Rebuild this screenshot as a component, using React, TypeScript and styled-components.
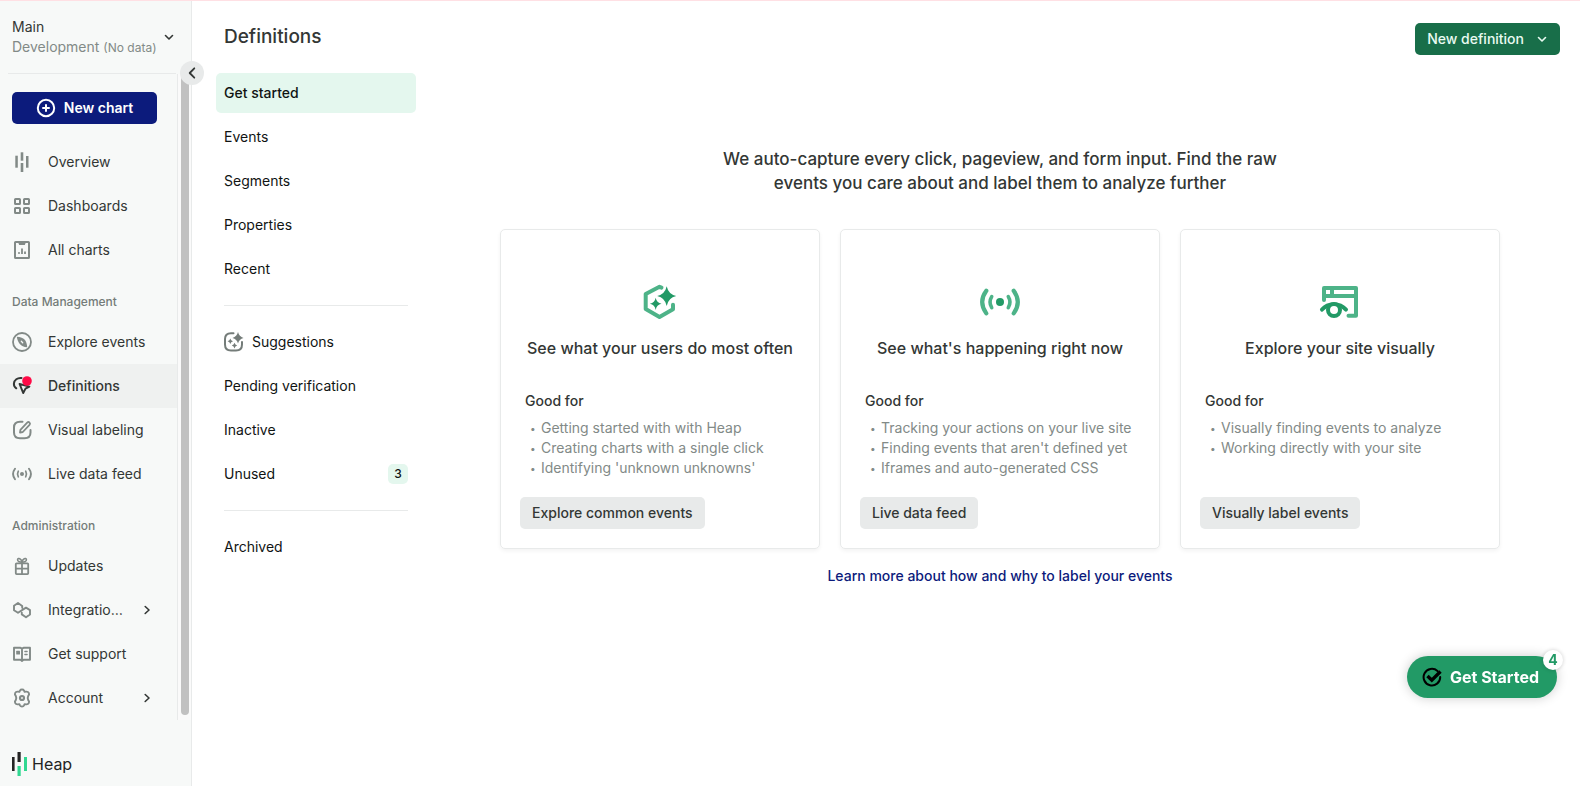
import React from "react";
import styled, { createGlobalStyle, css } from "styled-components";

const GlobalStyle = createGlobalStyle`
  *, *::before, *::after { box-sizing: border-box; }
  body {
    margin: 0;
    background: #fff;
    color: #333735;
    font-family: Inter, "Liberation Sans", sans-serif;
    font-size: 14px;
    line-height: 20px;
  }
  button { font: inherit; color: inherit; border: 0; padding: 0; background: none; cursor: pointer; }
  a { color: inherit; text-decoration: none; }
  h1, h2, h3, p, ul { margin: 0; padding: 0; font-weight: 400; }
  ul { list-style: none; }
  svg { display: block; flex: none; }
`;

/* ---------- Icons ---------- */

const Icon = ({ size = 20, children }: { size?: number; children: React.ReactNode }) => (
  <svg
    width={size}
    height={size}
    viewBox={`0 0 ${size} ${size}`}
    fill="none"
    stroke="currentColor"
    strokeWidth="2"
    strokeLinecap="round"
    strokeLinejoin="round"
    aria-hidden="true"
  >
    {children}
  </svg>
);

const OverviewIcon = () => (
  <Icon>
    <g fill="currentColor" stroke="none">
      <rect x="3.300" y="3.700" width="2.500" height="12" />
      <rect x="8.700" y="0.300" width="2.600" height="8.400" />
      <rect x="8.700" y="11" width="2.600" height="9" />
      <rect x="14" y="4" width="2.500" height="11.700" />
    </g>
  </Icon>
);

const DashboardsIcon = () => (
  <Icon>
    <rect x="3" y="3" width="5" height="5" rx="0.600" />
    <rect x="12" y="3" width="5" height="5" rx="0.600" />
    <rect x="3" y="12" width="5" height="5" rx="0.600" />
    <rect x="12" y="12" width="5" height="5" rx="0.600" />
  </Icon>
);

const ChartsIcon = () => (
  <Icon>
    <rect x="3" y="2" width="14" height="16" rx="0.600" />
    <path d="M6 2h8l-1.200 3H7.200z" fill="currentColor" stroke="none" />
    <path d="M10 8.500v5.500M13 11.500V14" strokeWidth="1.800" strokeLinecap="butt" />
    <circle cx="7" cy="13" r="1" fill="currentColor" stroke="none" />
  </Icon>
);

const CompassIcon = () => (
  <Icon>
    <circle cx="10" cy="10" r="9" strokeWidth="1.800" />
    <path
      d="M4.800 4.800c3.500.2 6.800 1.300 8.200 3.200 1.300 2 2 4.200 2.200 7.200-3.500-.2-5.800-1.200-7.400-3.200C6.300 10 5.200 8 4.800 4.800z"
      fill="currentColor"
      stroke="none"
    />
    <path d="M9.300 9.300l1.400 1.400" stroke="#f7f9f8" strokeWidth="1.300" />
  </Icon>
);

const DefinitionsIcon = () => (
  <Icon>
    <path d="M4.300 12.300C2.600 11.200 1.800 9.500 1.900 7.600 2.200 4 5.500 1.500 9.500 2" />
    <path d="M7.600 8l9.800 2.600-3.900 2-2.300 4.400z" />
    <circle cx="15" cy="5" r="4.800" fill="#ff0a46" stroke="none" />
  </Icon>
);

const LabelingIcon = () => (
  <Icon>
    <path d="M10.500 1.800H8C4 1.800 2 3.800 2 7.500v5C2 16.200 4 18.200 8 18.200h4.500c4 0 6-2 6-5.700V10" />
    <path
      d="M8 12.600l.4-2.800 6.800-7.100c.8-.8 1.600-.8 2.300-.1.700.7.700 1.500 0 2.300l-6.700 7.100z"
      strokeWidth="1.800"
    />
  </Icon>
);

const LiveIcon = () => (
  <Icon>
    <path d="M3 4.800C.6 8 .6 12 3 15.200M17 4.800c2.400 3.200 2.400 7.200 0 10.400" strokeWidth="1.900" />
    <path d="M6.300 7.200c-1 1.900-1 3.700 0 5.600M13.700 7.200c1 1.900 1 3.700 0 5.600" strokeWidth="1.700" />
    <circle cx="10" cy="10" r="2" fill="currentColor" stroke="none" />
  </Icon>
);

const GiftIcon = () => (
  <Icon>
    <rect x="3.800" y="7.300" width="12.400" height="10.800" rx="0.800" strokeWidth="1.800" />
    <path d="M10 6.500v11.300M4 12.600h12" strokeWidth="1.800" />
    <path
      d="M10 6.200C7.300 6.200 5.300 5.200 5.600 3.500 6.200 1.600 9.300 2.500 10 6.200zM10 6.200c2.700 0 4.700-1 4.400-2.700C13.800 1.600 10.700 2.500 10 6.200z"
      strokeWidth="1.600"
    />
  </Icon>
);

const IntegrationsIcon = () => (
  <Icon>
    <path
      d="M10.200 7.800V6L6 3 2 5.800v4.400L6 12.800l8-5.200 4 2.500v4.400L14 17.200l-4.200-2.800v-1.700"
      strokeWidth="1.900"
    />
  </Icon>
);

const SupportIcon = () => (
  <Icon>
    <path d="M2 3.800h6.500L10 4.600l1.500-.8H18v12h-6.500L10 17l-1.500-1.200H2zM10 4.600V17" strokeWidth="1.900" />
    <rect x="4.200" y="6.800" width="3.800" height="3.800" rx="0.500" fill="currentColor" stroke="none" />
    <path d="M13 7.500h2M13 10.500h2" strokeWidth="1.600" />
  </Icon>
);

const GearIcon = () => (
  <Icon>
    <path
      d="M8.100 2.300C8.500 1.500 9.200 1.500 10 1.500s1.500 0 1.900.8l.7 1.500 1.700-.2c1.600-.1 2.100.5 2.600 1.500.6 1.200.3 1.800-.7 2.900L15.700 10l.5 2c1 1.100 1.300 1.700.7 2.900-.5 1-1 1.600-2.600 1.500l-1.700-.2-.7 1.500c-.4.800-1.100.8-1.900.8s-1.500 0-1.900-.8l-.7-1.500-1.700.2c-1.600.1-2.100-.5-2.600-1.500-.6-1.200-.3-1.800.7-2.900L4.300 10l-.5-2c-1-1.100-1.300-1.700-.7-2.900.5-1 1-1.600 2.600-1.500l1.700.2z"
      strokeWidth="1.900"
    />
    <circle cx="10" cy="10" r="2" strokeWidth="2.200" />
  </Icon>
);

const SuggestionsIcon = () => (
  <Icon>
    <path d="M9.500 1.200H7C3 1.200 1 3.200 1 7v5.500C1 16.500 3 18.500 7 18.500h5c4 0 6-2 6-6V10" />
    <g fill="currentColor" stroke="none">
      <path d="M14 0q1.100 4.700 5.500 5.900-4.400 1.100-5.500 5.600-1.100-4.500-5.500-5.600 4.400-1.200 5.500-5.900z" />
      <path d="M6.300 6.500q.5 2.300 2.700 2.800-2.200.5-2.700 2.800-.5-2.300-2.700-2.800 2.200-.5 2.700-2.800z" />
      <path d="M10.500 10.800q.5 2.300 2.700 2.800-2.200.5-2.700 2.800-.5-2.300-2.700-2.800 2.200-.5 2.700-2.800z" />
    </g>
  </Icon>
);

const PlusCircleIcon = () => (
  <Icon>
    <circle cx="10" cy="10" r="8.200" />
    <path d="M10 7v6M7 10h6" />
  </Icon>
);

const CheckIcon = () => (
  <Icon>
    <path d="M15.500 4A8.300 8.300 0 1 0 18.200 10" strokeWidth="2" />
    <path d="M5.500 9l4.300 4.200 8.700-8.700" strokeWidth="3.400" strokeLinecap="butt" strokeLinejoin="miter" />
  </Icon>
);

const ChevronDown = () => (
  <Icon size={12}>
    <path d="M2.500 4.500 6 8l3.500-3.500" strokeWidth="1.600" />
  </Icon>
);
const ChevronRight = () => (
  <Icon size={12}>
    <path d="M4.200 2.500 8 6l-3.800 3.500" strokeWidth="1.600" />
  </Icon>
);
const ChevronLeft = () => (
  <Icon size={12}>
    <path d="M8.300 1.300 3.700 6l4.600 4.700" strokeWidth="1.800" />
  </Icon>
);

const OftenIcon = () => (
  <Icon size={48}>
    <path d="M25.500 9.600 23.500 8.800 9.700 16v15l13.800 8L37 31.300v-4.600" stroke="#4db388" strokeWidth="4" />
    <path
      d="M30.700 8.300q1.700 8 9.500 9.700-7.800 1.700-9.500 9.900-1.700-8.200-9.500-9.900 7.800-1.700 9.500-9.700zM19.700 19.800q.9 5 5.800 5.900-4.900.9-5.800 6.200-.9-5.300-5.800-6.200 4.900-.9 5.800-5.900z"
      fill="#229a66"
      stroke="none"
    />
  </Icon>
);

const LiveNowIcon = () => (
  <Icon size={48}>
    <g stroke="#4db388">
      <path d="M10.300 12.800C5 20 5 28 10.300 35.400M37.700 12.800C43 20 43 28 37.700 35.400" strokeWidth="4.200" />
      <path d="M15.700 18.600c-2.300 3.800-2.300 7.200 0 11M32.300 18.600c2.300 3.800 2.300 7.200 0 11" strokeWidth="3.600" />
    </g>
    <circle cx="24" cy="24" r="4" fill="#229a66" stroke="none" />
  </Icon>
);

const VisualIcon = () => (
  <Icon size={48}>
    <path d="M8 22V10h32v27.700h-7.500M8 18h32M16 10v8" stroke="#4db388" strokeWidth="4" />
    <g stroke="#229a66" strokeWidth="4">
      <path d="M6 31.600c6-7.300 17.600-7.300 24 0" />
      <circle cx="18" cy="32" r="6" fill="#fff" />
    </g>
  </Icon>
);

const HeapMark = () => (
  <svg width="16" height="24" viewBox="0 0 16 24" aria-hidden="true">
    <rect x="0" y="5" width="2.600" height="14" fill="#242424" />
    <rect x="5.500" y="0" width="3.200" height="10" fill="#242424" />
    <rect x="5.500" y="14" width="3.200" height="10" fill="#31d891" />
    <rect x="12" y="5" width="3" height="14" fill="#31d891" />
  </svg>
);

/* ---------- Layout ---------- */

const Page = styled.div`
  display: flex;
  min-height: 100vh;
  border-top: 1px solid #ffe0e4;
`;

const Sidebar = styled.aside`
  position: relative;
  flex: none;
  display: flex;
  flex-direction: column;
  width: 192px;
  background: #f7f9f8;
  border-right: 1px solid #e8eaea;
`;

const EnvSwitch = styled.button`
  display: flex;
  align-items: center;
  justify-content: space-between;
  height: 73px;
  margin: 0 15px 0 8px;
  padding: 0 1px 0 4px;
  border-bottom: 1px solid #e8eaea;
  text-align: left;
`;

const EnvText = styled.span`
  display: block;
  white-space: nowrap;
  small {
    display: block;
    color: #828a87;
    font-size: 14px;
  }
  small > span {
    font-size: 12px;
  }
`;

const CollapseButton = styled.button`
  position: absolute;
  top: 60px;
  right: -13px;
  display: flex;
  align-items: center;
  justify-content: center;
  width: 24px;
  height: 24px;
  border-radius: 50%;
  background: #e8eaea;
`;

const ScrollArea = styled.div`
  flex: 1;
  display: flex;
`;

const Nav = styled.nav`
  flex: 1;
  min-width: 0;
  display: flex;
  flex-direction: column;
  padding-top: 18px;
  border-right: 1px solid #e8eaea;
`;

const ScrollTrack = styled.div`
  flex: none;
  display: flex;
  width: 13px;
  padding: 2px 2px 5px 3px;
  background: #fafafa;
`;

const ScrollThumb = styled.div`
  flex: 1;
  border-radius: 4px;
  background: #c1c1c1;
`;

const NewChart = styled.button`
  display: flex;
  align-items: center;
  justify-content: center;
  gap: 8px;
  height: 32px;
  margin: 0 20px 16px 12px;
  border-radius: 5px;
  background: #0c1b7c;
  color: #fff;
  font-weight: 600;
`;

const SectionLabel = styled.h2`
  height: 48px;
  padding: 20px 12px 8px;
  color: #747c79;
  font-size: 12px;
  font-weight: 500;
`;

const NavLink = styled.a<{ $active?: boolean }>`
  display: flex;
  align-items: center;
  gap: 16px;
  height: 44px;
  padding: 0 24px 0 12px;
  > svg:first-child {
    color: #828a87;
  }
  ${(p) =>
    p.$active &&
    css`
      background: #eff1f0;
      font-weight: 500;
      > svg:first-child {
        color: #333735;
      }
    `}
`;

const NavText = styled.span`
  flex: 1;
  min-width: 0;
  overflow: hidden;
  text-overflow: ellipsis;
  white-space: nowrap;
`;

const Brand = styled.a`
  display: flex;
  align-items: center;
  gap: 4px;
  height: 67px;
  padding: 20px 12px 0;
  color: #242424;
  font-size: 16px;
`;

const Main = styled.main`
  flex: 1;
  min-width: 0;
  padding: 0 20px 0 24px;
`;

const TopBar = styled.header`
  display: flex;
  align-items: center;
  justify-content: space-between;
  height: 72px;
  padding: 4px 0 0 8px;
`;

const Title = styled.h1`
  padding-bottom: 4px;
  font-size: 19px;
  line-height: 28px;
  font-weight: 500;
`;

const NewDefinition = styled.button`
  display: flex;
  align-items: center;
  gap: 12px;
  height: 32px;
  padding: 0 12px;
  border-radius: 5px;
  background: #186e49;
  color: #e9fbf2;
  font-weight: 500;
`;

const Columns = styled.div`
  display: flex;
  gap: 24px;
`;

const SubNav = styled.nav`
  flex: none;
  display: flex;
  flex-direction: column;
  gap: 4px;
  width: 200px;
  color: #101413;
`;

const SubLink = styled.a<{ $active?: boolean }>`
  display: flex;
  align-items: center;
  gap: 8px;
  height: 40px;
  padding: 0 8px;
  border-radius: 5px;
  background: ${(p) => (p.$active ? "#e4f7ee" : "transparent")};
  font-weight: ${(p) => (p.$active ? 500 : 400)};
  svg {
    color: #747c79;
  }
`;

const Divider = styled.hr`
  width: 184px;
  height: 1px;
  margin: 12px 8px;
  border: 0;
  background: #e8eaea;
`;

const Count = styled.span`
  width: 20px;
  height: 20px;
  margin-left: auto;
  border-radius: 5px;
  background: #e4f7ee;
  font-size: 12px;
  font-weight: 500;
  text-align: center;
`;

const Intro = styled.section`
  flex: 1;
  display: flex;
  flex-direction: column;
  align-items: center;
  padding-top: 74px;
`;

const Headline = styled.p`
  max-width: 600px;
  font-size: 17px;
  line-height: 24px;
  font-weight: 500;
  text-align: center;
`;

const Cards = styled.div`
  display: flex;
  flex-wrap: wrap;
  justify-content: center;
  gap: 20px;
  margin: 34px 0 17px;
`;

const CardBox = styled.article`
  display: flex;
  flex-direction: column;
  width: 320px;
  min-height: 320px;
  padding: 48px 19px 19px;
  border: 1px solid #e8eaea;
  border-radius: 5px;
  box-shadow: 0 2px 4px rgba(0, 0, 0, 0.05);
  > svg {
    align-self: center;
  }
`;

const CardTitle = styled.h3`
  padding: 10px 0 31px;
  font-size: 16px;
  line-height: 24px;
  font-weight: 500;
  text-align: center;
`;

const GoodFor = styled.p`
  padding: 0 5px 7px;
  font-weight: 500;
`;

const Perks = styled.ul`
  padding-left: 21px;
  color: #828a87;
  li::before {
    content: "•";
    float: left;
    width: 11px;
    margin-left: -11px;
    font-size: 10px;
  }
`;

const CardButton = styled.button`
  align-self: flex-start;
  height: 32px;
  margin-top: auto;
  padding: 0 12px;
  border-radius: 5px;
  background: #e8eaea;
  font-weight: 500;
`;

const LearnMore = styled.a`
  color: #0c1b7c;
  font-weight: 500;
`;

const Launcher = styled.button`
  position: fixed;
  right: 23px;
  bottom: 88px;
  display: flex;
  align-items: center;
  gap: 8px;
  height: 42px;
  padding: 0 18px 0 15px;
  border-radius: 21px;
  background: #229a66;
  box-shadow: 0 0 12px rgba(0, 0, 0, 0.2);
  color: #fff;
  font-size: 16px;
  font-weight: 700;
  svg {
    color: #000;
  }
`;

const LauncherCount = styled.span`
  position: absolute;
  top: -6px;
  right: -6px;
  width: 20px;
  height: 20px;
  border-radius: 50%;
  background: #fff;
  box-shadow: 0 0 4px rgba(0, 0, 0, 0.2);
  color: #229a66;
  font-size: 14px;
  text-align: center;
`;

/* ---------- Content ---------- */

type Item = { label: string; icon: React.ReactNode; active?: boolean; more?: boolean };

const navSections: { title?: string; items: Item[] }[] = [
  {
    items: [
      { label: "Overview", icon: <OverviewIcon /> },
      { label: "Dashboards", icon: <DashboardsIcon /> },
      { label: "All charts", icon: <ChartsIcon /> },
    ],
  },
  {
    title: "Data Management",
    items: [
      { label: "Explore events", icon: <CompassIcon /> },
      { label: "Definitions", icon: <DefinitionsIcon />, active: true },
      { label: "Visual labeling", icon: <LabelingIcon /> },
      { label: "Live data feed", icon: <LiveIcon /> },
    ],
  },
  {
    title: "Administration",
    items: [
      { label: "Updates", icon: <GiftIcon /> },
      { label: "Integrations", icon: <IntegrationsIcon />, more: true },
      { label: "Get support", icon: <SupportIcon /> },
      { label: "Account", icon: <GearIcon />, more: true },
    ],
  },
];

const cards = [
  {
    icon: <OftenIcon />,
    title: "See what your users do most often",
    perks: ["Getting started with with Heap", "Creating charts with a single click", "Identifying 'unknown unknowns'"],
    action: "Explore common events",
  },
  {
    icon: <LiveNowIcon />,
    title: "See what's happening right now",
    perks: ["Tracking your actions on your live site", "Finding events that aren't defined yet", "Iframes and auto-generated CSS"],
    action: "Live data feed",
  },
  {
    icon: <VisualIcon />,
    title: "Explore your site visually",
    perks: ["Visually finding events to analyze", "Working directly with your site"],
    action: "Visually label events",
  },
];

export default function App() {
  return (
    <>
      <GlobalStyle />
      <Page>
        <Sidebar>
          <EnvSwitch>
            <EnvText>
              Main
              <small>
                Development <span>(No data)</span>
              </small>
            </EnvText>
            <ChevronDown />
          </EnvSwitch>
          <CollapseButton aria-label="Collapse sidebar">
            <ChevronLeft />
          </CollapseButton>
          <ScrollArea>
            <Nav>
              <NewChart>
                <PlusCircleIcon />
                New chart
              </NewChart>
              {navSections.map((section, i) => (
                <React.Fragment key={i}>
                  {section.title && <SectionLabel>{section.title}</SectionLabel>}
                  {section.items.map((item) => (
                    <NavLink key={item.label} href="#" $active={item.active}>
                      {item.icon}
                      <NavText>{item.label}</NavText>
                      {item.more && <ChevronRight />}
                    </NavLink>
                  ))}
                </React.Fragment>
              ))}
            </Nav>
            <ScrollTrack>
              <ScrollThumb />
            </ScrollTrack>
          </ScrollArea>
          <Brand href="#">
            <HeapMark />
            Heap
          </Brand>
        </Sidebar>
        <Main>
          <TopBar>
            <Title>Definitions</Title>
            <NewDefinition>
              New definition
              <ChevronDown />
            </NewDefinition>
          </TopBar>
          <Columns>
            <SubNav>
              <SubLink href="#" $active>Get started</SubLink>
              <SubLink href="#">Events</SubLink>
              <SubLink href="#">Segments</SubLink>
              <SubLink href="#">Properties</SubLink>
              <SubLink href="#">Recent</SubLink>
              <Divider />
              <SubLink href="#">
                <SuggestionsIcon />
                Suggestions
              </SubLink>
              <SubLink href="#">Pending verification</SubLink>
              <SubLink href="#">Inactive</SubLink>
              <SubLink href="#">
                Unused
                <Count>3</Count>
              </SubLink>
              <Divider />
              <SubLink href="#">Archived</SubLink>
            </SubNav>
            <Intro>
              <Headline>
                We auto-capture every click, pageview, and form input. Find the raw
                <br />
                events you care about and label them to analyze further
              </Headline>
              <Cards>
                {cards.map((card) => (
                  <CardBox key={card.title}>
                    {card.icon}
                    <CardTitle>{card.title}</CardTitle>
                    <GoodFor>Good for</GoodFor>
                    <Perks>
                      {card.perks.map((perk) => (
                        <li key={perk}>{perk}</li>
                      ))}
                    </Perks>
                    <CardButton>{card.action}</CardButton>
                  </CardBox>
                ))}
              </Cards>
              <LearnMore href="#">Learn more about how and why to label your events</LearnMore>
            </Intro>
          </Columns>
        </Main>
        <Launcher>
          <CheckIcon />
          Get Started
          <LauncherCount>4</LauncherCount>
        </Launcher>
      </Page>
    </>
  );
}
